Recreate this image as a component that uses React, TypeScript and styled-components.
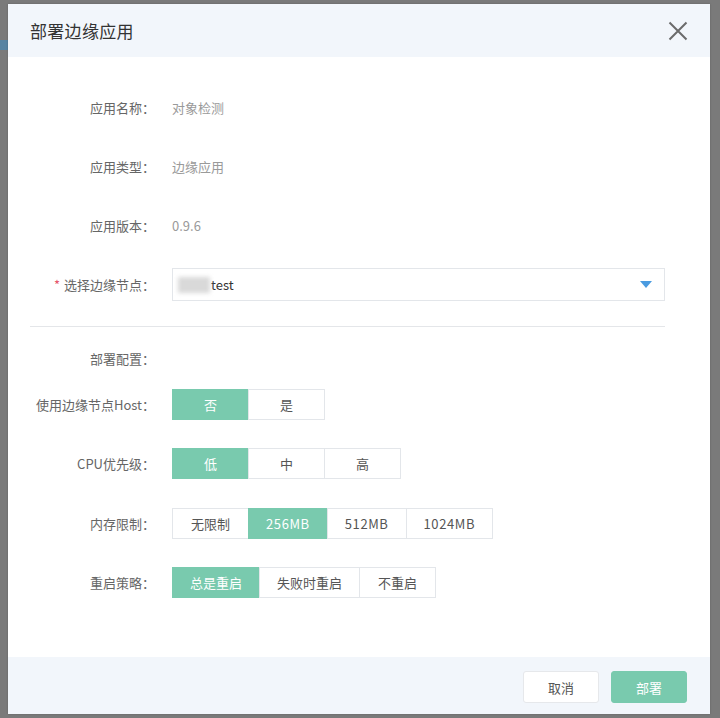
import React, { useState } from "react";
import styled, { createGlobalStyle } from "styled-components";

const Global = createGlobalStyle`
  html, body { margin: 0; padding: 0; }
  body {
    background: #7a7a7a;
    font-family: "Noto Sans CJK SC", "Noto Sans", sans-serif;
    width: 720px;
    height: 718px;
    overflow: hidden;
  }
`;

const Page = styled.div`
  position: relative;
  width: 720px;
  height: 718px;
  padding: 4px 0 0 8px;
  box-sizing: border-box;
`;

const BackdropHint = styled.div`
  position: absolute;
  left: 0;
  top: 40px;
  width: 8px;
  height: 10px;
  background: #4f86ad;
  opacity: 0.8;
`;

const Modal = styled.div`
  position: relative;
  width: 702px;
  height: 710px;
  background: #ffffff;
  display: flex;
  flex-direction: column;
  box-shadow: 0 0 2px rgba(0, 0, 0, 0.2);
`;

const Header = styled.div`
  height: 53px;
  flex: none;
  background: #f2f6fb;
  display: flex;
  align-items: center;
  justify-content: space-between;
  padding: 0 21px 0 22px;
`;

const Title = styled.div`
  font-size: 17px;
  color: #333;
  letter-spacing: 0.3px;
`;

const CloseBtn = styled.button`
  width: 22px;
  height: 22px;
  padding: 0;
  border: none;
  background: transparent;
  display: flex;
  align-items: center;
  justify-content: center;
  cursor: pointer;
`;

const Body = styled.div`
  flex: 1;
  padding: 34px 45px 0 0;
  display: flex;
  flex-direction: column;
`;

const Row = styled.div<{ $mt?: number }>`
  display: grid;
  grid-template-columns: 147px 1fr;
  column-gap: 17px;
  align-items: center;
  min-height: 32px;
  margin-top: ${(p) => p.$mt ?? 0}px;
`;

const Label = styled.div`
  text-align: right;
  font-size: 13px;
  color: #666;
  white-space: nowrap;
`;

const Star = styled.span`
  color: #e5556a;
  margin-right: 4px;
`;

const Value = styled.div`
  font-size: 13px;
  color: #9a9a9a;
`;

const Select = styled.div`
  height: 33px;
  box-sizing: border-box;
  border: 1px solid #e3e6ea;
  display: flex;
  align-items: center;
  padding: 0 12px 0 5px;
  font-size: 13px;
  color: #333;
`;

const Blurred = styled.span`
  display: inline-block;
  width: 32px;
  height: 16px;
  background: #d9d9d9;
  filter: blur(2px);
  margin-right: 1px;
`;

const SelectText = styled.span`
  flex: 1;
`;

const Divider = styled.div`
  height: 1px;
  background: #e4e6e9;
  margin: 25px 0 0 22px;
`;

const Group = styled.div`
  display: flex;
  height: 31px;
`;

const SegBtn = styled.button<{ $active: boolean }>`
  min-width: 77px;
  height: 31px;
  padding: 0 17px;
  box-sizing: border-box;
  border: 1px solid ${(p) => (p.$active ? "#79caae" : "#e3e6ea")};
  margin-left: -1px;
  &:first-child { margin-left: 0; }
  background: ${(p) => (p.$active ? "#79caae" : "#ffffff")};
  color: ${(p) => (p.$active ? "#ffffff" : "#555")};
  font-family: inherit;
  font-size: 13px;
  cursor: pointer;
`;

const Latin = styled.span`
  letter-spacing: 0.6px;
`;

const Footer = styled.div`
  height: 57px;
  flex: none;
  background: #f2f6fb;
  display: flex;
  align-items: center;
  justify-content: flex-end;
  gap: 12px;
  padding: 0 23px 0 0;
`;

const FootBtn = styled.button<{ $primary?: boolean }>`
  width: 76px;
  height: 32px;
  border-radius: 3px;
  border: 1px solid ${(p) => (p.$primary ? "#79caae" : "#e6e8eb")};
  background: ${(p) => (p.$primary ? "#79caae" : "#ffffff")};
  color: ${(p) => (p.$primary ? "#ffffff" : "#555")};
  font-family: inherit;
  font-size: 13px;
  margin-top: 3px;
  cursor: pointer;
`;

type SegProps = { options: string[]; initial: number };

const isLatin = (s: string) => /^[\x00-\x7f]+$/.test(s);

const Segmented: React.FC<SegProps> = ({ options, initial }) => {
  const [sel, setSel] = useState(initial);
  return (
    <Group>
      {options.map((o, i) => (
        <SegBtn key={o} $active={i === sel} onClick={() => setSel(i)}>
          {isLatin(o) ? <Latin>{o}</Latin> : o}
        </SegBtn>
      ))}
    </Group>
  );
};

export default function App() {
  return (
    <>
      <Global />
      <Page>
        <BackdropHint />
        <Modal>
          <Header>
            <Title>部署边缘应用</Title>
            <CloseBtn aria-label="close">
              <svg width="20" height="20" viewBox="0 0 20 20">
                <path d="M1.5 1.5 L18.5 18.5 M18.5 1.5 L1.5 18.5" stroke="#6b6b6b" strokeWidth="2" fill="none" />
              </svg>
            </CloseBtn>
          </Header>
          <Body>
            <Row>
              <Label>应用名称：</Label>
              <Value>对象检测</Value>
            </Row>
            <Row $mt={27}>
              <Label>应用类型：</Label>
              <Value>边缘应用</Value>
            </Row>
            <Row $mt={27}>
              <Label>应用版本：</Label>
              <Value>0.9.6</Value>
            </Row>
            <Row $mt={27}>
              <Label>
                <Star>*</Star>选择边缘节点：
              </Label>
              <Select>
                <Blurred />
                <SelectText>test</SelectText>
                <svg width="12" height="7" viewBox="0 0 12 7">
                  <path d="M0 0 H12 L6 7 Z" fill="#4a9be0" />
                </svg>
              </Select>
            </Row>
            <Divider />
            <Row $mt={15}>
              <Label>部署配置：</Label>
              <div />
            </Row>
            <Row $mt={14}>
              <Label>使用边缘节点Host：</Label>
              <Segmented options={["否", "是"]} initial={0} />
            </Row>
            <Row $mt={27}>
              <Label>CPU优先级：</Label>
              <Segmented options={["低", "中", "高"]} initial={0} />
            </Row>
            <Row $mt={28}>
              <Label>内存限制：</Label>
              <Segmented options={["无限制", "256MB", "512MB", "1024MB"]} initial={1} />
            </Row>
            <Row $mt={27}>
              <Label>重启策略：</Label>
              <Segmented options={["总是重启", "失败时重启", "不重启"]} initial={0} />
            </Row>
          </Body>
          <Footer>
            <FootBtn>取消</FootBtn>
            <FootBtn $primary>部署</FootBtn>
          </Footer>
        </Modal>
      </Page>
    </>
  );
}
